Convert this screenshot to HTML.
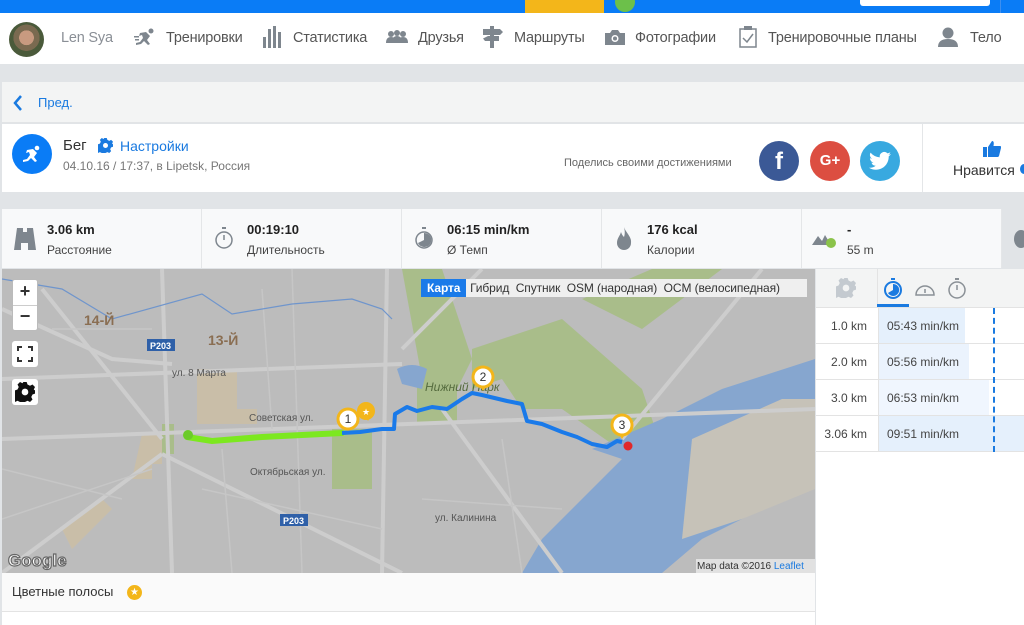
<!DOCTYPE html>
<html><head><meta charset="utf-8"><style>
*{box-sizing:border-box;margin:0;padding:0}
body{width:1024px;height:625px;overflow:hidden;background:#e1e4e7;font-family:"Liberation Sans",Arial,sans-serif;position:relative;color:#333}
.abs{position:absolute}
.nav{top:13px;left:0;width:1024px;height:51px;background:#fff}
.nav span{position:absolute;top:17px;font-size:14.5px;color:#555;letter-spacing:-0.2px}
.stat{position:absolute;top:209px;height:59px;width:200px;border-right:1px solid #e4e6e8;background:#f8f9fa}
.stat b{position:absolute;left:45px;top:13px;font-size:13px;color:#222}
.stat i{position:absolute;left:45px;top:34px;font-size:12px;font-style:normal;color:#444}
.row{position:absolute;left:816px;width:208px;height:36px;border-bottom:1px solid #e3e3e3;background:#fff;font-size:12px;color:#444}
.row .k{position:absolute;left:0;width:51px;text-align:right;top:11px}
.row .bar{position:absolute;left:62px;top:0;height:35px;background:#e5f0fc;border-left:1px solid #e3e3e3}
.row .v{position:absolute;left:71px;top:11px}
</style></head><body>
<div class="abs" style="top:0;left:0;width:1024px;height:13px;background:#0a7cf6"></div>
<div class="abs" style="top:0;left:525px;width:79px;height:13px;background:#f3b61a"></div>
<div class="abs" style="top:-8px;left:615px;width:20px;height:20px;border-radius:50%;background:#6cc04a"></div>
<div class="abs" style="top:0;left:860px;width:130px;height:6px;background:#fff;border-radius:0 0 3px 3px"></div>
<div class="abs" style="top:0;left:1000px;width:1px;height:13px;background:#3d8ff0"></div>
<div class="abs nav">
<div class="abs" style="left:9px;top:9px;width:35px;height:35px;border-radius:50%;background:radial-gradient(circle at 50% 45%,#c89a80 0 28%,#7a6a50 29% 50%,#4a5a3a 51%)"></div>
<span style="left:61px;color:#8a8f96">Len Sya</span>
<svg class="abs" style="left:134px;top:14px" width="22" height="20" viewBox="0 0 22 20"><g fill="#7e868e"><circle cx="17" cy="4" r="2.5"/><path d="M6 6l6-1 4 4-3 4 3 4-2 1-4-4-3 3-5 1 0-2 4-1 3-4-1-3-3 1z"/><rect x="0" y="9" width="5" height="1.5"/><rect x="1" y="12" width="4" height="1.5"/></g></svg>
<span style="left:166px">Тренировки</span>
<svg class="abs" style="left:263px;top:13px" width="20" height="22"><g fill="#7e868e"><rect x="0" y="11" width="3" height="11"/><rect x="5" y="3" width="3" height="19"/><rect x="10" y="0" width="3" height="22"/><rect x="15" y="6" width="3" height="16"/></g></svg>
<span style="left:293px">Статистика</span>
<svg class="abs" style="left:386px;top:17px" width="22" height="14"><g fill="#7e868e"><circle cx="5" cy="4" r="3"/><circle cx="11" cy="3" r="3"/><circle cx="17" cy="4" r="3"/><path d="M0 13q0-6 5-6t5 6zM6 13q0-7 5-7t5 7zM12 13q0-6 5-6t5 6z"/></g></svg>
<span style="left:418px">Друзья</span>
<svg class="abs" style="left:483px;top:13px" width="20" height="22"><g fill="#7e868e"><rect x="7" y="0" width="4" height="22"/><path d="M0 3h17l3 3-3 3H0zM5 10h11v5H2l-2-2.5z"/></g></svg>
<span style="left:514px">Маршруты</span>
<svg class="abs" style="left:605px;top:17px" width="20" height="15"><path fill="#7e868e" d="M0 3h5l2-3h6l2 3h5v12H0z"/><circle cx="10" cy="8.5" r="3.5" fill="#fff"/><circle cx="10" cy="8.5" r="2" fill="#7e868e"/></svg>
<span style="left:635px">Фотографии</span>
<svg class="abs" style="left:739px;top:13px" width="18" height="22"><rect x="1" y="3" width="16" height="18" fill="none" stroke="#7e868e" stroke-width="1.5"/><rect x="5" y="0" width="8" height="4" fill="#7e868e"/><path d="M4 12l4 4 6-8" fill="none" stroke="#7e868e" stroke-width="1.5"/></svg>
<span style="left:768px">Тренировочные планы</span>
<svg class="abs" style="left:938px;top:14px" width="20" height="20"><g fill="#7e868e"><circle cx="10" cy="6" r="5.5"/><path d="M0 20q0-8 10-8t10 8z"/></g></svg>
<span style="left:970px">Тело</span>
</div>
<div class="abs" style="top:82px;left:2px;width:1022px;height:41px;background:#f3f4f4;border-bottom:1px solid #e2e4e6"></div>
<svg class="abs" style="left:13px;top:95px" width="10" height="16"><path d="M8 1L2 8l6 7" fill="none" stroke="#1a7ae0" stroke-width="2.5"/></svg>
<div class="abs" style="left:38px;top:95px;font-size:13px;color:#1a7ae0">Пред.</div>
<div class="abs" style="top:124px;left:2px;width:1022px;height:68px;background:#fff"></div>
<div class="abs" style="top:124px;left:922px;width:1px;height:68px;background:#e4e6e8"></div>
<div class="abs" style="left:12px;top:134px;width:40px;height:40px;border-radius:50%;background:#0a7cf6"></div>
<svg class="abs" style="left:21px;top:143px" width="22" height="22" viewBox="0 0 22 20"><g fill="#fff"><circle cx="16" cy="4" r="2.3"/><path d="M6 6l6-1 4 4-3 4 3 4-2 1-4-4-3 3-5 1 0-2 4-1 3-4-1-3-3 1z"/></g></svg>
<div class="abs" style="left:63px;top:137px;font-size:15px;color:#333">Бег</div>
<svg class="abs" style="left:98px;top:138px" width="15" height="15" viewBox="0 0 24 24"><path fill="#1a7ae0" d="M10 0h4l1 3 3 1.5 3-1.5 3 3-1.5 3L24 10v4l-3 1-1.5 3 1.5 3-3 3-3-1.5-3 1.5-1 3h-4l-1-3-3-1.5-3 1.5-3-3 1.5-3L0 14v-4l3-1 1.5-3L3 3l3-3 3 1.5z"/><circle cx="12" cy="12" r="4" fill="#fff"/></svg>
<div class="abs" style="left:120px;top:138px;font-size:14px;color:#1a7ae0">Настройки</div>
<div class="abs" style="left:63px;top:159px;font-size:12px;color:#777">04.10.16 / 17:37, в Lipetsk, Россия</div>
<div class="abs" style="left:564px;top:157px;font-size:11px;color:#666">Поделись своими достижениями</div>
<div class="abs" style="left:759px;top:141px;width:40px;height:40px;border-radius:50%;background:#3b5996;color:#fff;font-weight:bold;font-size:24px;text-align:center;line-height:42px">f</div>
<div class="abs" style="left:810px;top:141px;width:40px;height:40px;border-radius:50%;background:#dc4e41;color:#fff;font-weight:bold;font-size:15px;text-align:center;line-height:40px">G+</div>
<div class="abs" style="left:860px;top:141px;width:40px;height:40px;border-radius:50%;background:#38a9e0"></div>
<svg class="abs" style="left:869px;top:151px" width="22" height="20" viewBox="0 0 24 20"><path fill="#fff" d="M24 2.4a10 10 0 01-2.8.8A5 5 0 0023.3.5a10 10 0 01-3.1 1.2A4.9 4.9 0 0011.8 6 14 14 0 011.7.9a4.9 4.9 0 001.5 6.6A4.9 4.9 0 011 6.9a4.9 4.9 0 003.9 4.8 5 5 0 01-2.2.1 4.9 4.9 0 004.6 3.4A9.9 9.9 0 010 17.3 14 14 0 007.5 19.5c9.1 0 14-7.5 14-14v-.6A10 10 0 0024 2.4z"/></svg>
<svg class="abs" style="left:983px;top:141px" width="18" height="16"><path fill="#1a7ae0" d="M0 6h4v10H0zM5 6l4-6c2 0 2 2 1.5 5H17c1 0 1.5 1 1 2l-2 8c-.3.8-1 1-2 1H5z"/></svg>
<div class="abs" style="left:953px;top:162px;font-size:14px;color:#333">Нравится</div>
<div class="abs" style="left:1020px;top:164px;width:8px;height:10px;border-radius:50%;background:#1a7ae0"></div>

<div class="stat" style="left:2px"><svg class="abs" style="left:12px;top:19px" width="22" height="22"><path fill="#7e868e" d="M3 0h6v4h4V0h6l3 22h-8v-7H7v7H0z"/></svg><b>3.06 km</b><i>Расстояние</i></div>
<div class="stat" style="left:202px"><svg class="abs" style="left:13px;top:18px" width="18" height="24"><rect x="7" y="0" width="4" height="2" fill="#7e868e"/><circle cx="9" cy="13" r="8" fill="none" stroke="#7e868e" stroke-width="1.5"/><path d="M9 8v5" stroke="#7e868e" stroke-width="1.5"/></svg><b>00:19:10</b><i>Длительность</i></div>
<div class="stat" style="left:402px"><svg class="abs" style="left:13px;top:18px" width="18" height="24"><rect x="7" y="0" width="4" height="2" fill="#7e868e"/><circle cx="9" cy="13" r="8" fill="none" stroke="#7e868e" stroke-width="1.5"/><path d="M9 13V6a7 7 0 11-6 10z" fill="#7e868e"/></svg><b>06:15 min/km</b><i>Ø Темп</i></div>
<div class="stat" style="left:602px"><svg class="abs" style="left:14px;top:18px" width="16" height="24"><path fill="#7e868e" d="M8 0C10 6 16 10 15 16A7 7 0 011 16C1 11 4 9 5 5c1 3 2 4 3 5C9 7 9 4 8 0z"/></svg><b>176 kcal</b><i>Калории</i></div>
<div class="stat" style="left:802px"><svg class="abs" style="left:10px;top:20px" width="26" height="20"><path fill="#7e868e" d="M0 16l6-9 4 5 3-6 6 10z"/><circle cx="19" cy="14" r="5" fill="#8bc34a"/></svg><b>-</b><i>55 m</i></div>
<div class="abs" style="left:1014px;top:230px;width:14px;height:18px;border-radius:50%;background:#7e868e"></div>

<svg class="abs" style="left:2px;top:269px" width="813" height="304" viewBox="0 0 813 304">
<rect width="813" height="304" fill="#bcbcbc"/>
<g fill="#a9bd8a">
<path d="M400 0L440 0 470 90 455 120 420 110z"/>
<path d="M470 80L560 50 640 120 660 180 610 175 560 140 520 140 500 110 470 120z"/>
<path d="M580 30L650 0 720 0 640 60z"/>
<path d="M330 160h40v60h-40z"/>
<path d="M160 155h12v30h-12z"/>
<path d="M415 105h40v50h-40z"/>
</g>
<g fill="#c9bea8"><path d="M195 100h40v40h20v15h-60z"/><path d="M140 165h20v30h-10v15h-20z"/><path d="M60 260l40-30 10 10-40 40z"/></g>
<path fill="#86a6cf" d="M590 180L660 150 720 120 813 90 813 210 760 240 700 270 660 304 520 304 540 270 580 230 620 190z"/>
<path fill="#c6c2b8" d="M690 170L780 130 813 130 813 220 740 250 680 270z"/>
<path fill="#86a6cf" d="M395 100q15-8 30 0l-5 20-20-5z"/>
<g fill="none" stroke="#cdcdcd" stroke-width="4">
<path d="M0 170L813 140"/><path d="M160 0L170 304"/><path d="M0 110L400 95"/><path d="M160 185L400 304"/><path d="M0 304L160 185"/>
<path d="M385 0L380 304"/><path d="M440 140L560 304"/><path d="M0 40L110 90 170 95"/><path d="M40 20L160 170"/><path d="M480 0L400 80"/><path d="M620 170L760 0"/>
</g>
<g fill="none" stroke="#c6c6c6" stroke-width="1.5">
<path d="M0 200L120 230"/><path d="M0 250L150 200"/><path d="M220 180L230 304"/><path d="M260 20L270 160"/><path d="M500 170L520 304"/><path d="M420 230L560 240"/><path d="M50 60L150 60"/><path d="M290 0L300 304"/><path d="M200 220L380 260"/>
</g>
<path d="M0 10L60 20 110 50 200 25 230 45 290 35 350 30 380 40 390 50" fill="none" stroke="#6f95cc" stroke-width="1.2"/>
<g fill="#2f60a8"><rect x="145" y="70" width="28" height="12"/><rect x="278" y="245" width="28" height="12"/></g>
<g fill="#fff" font-size="9" font-weight="bold"><text x="148" y="80">P203</text><text x="281" y="255">P203</text></g>
<g fill="#8a6e52" font-size="14" font-weight="bold"><text x="82" y="56">14-Й</text><text x="206" y="76">13-Й</text></g>
<g fill="#555" font-size="10"><text x="170" y="107">ул. 8 Марта</text><text x="247" y="152">Советская ул.</text><text x="248" y="206">Октябрьская ул.</text><text x="433" y="252">ул. Калинина</text></g>
<text x="423" y="122" fill="#556b3e" font-size="12" font-style="italic">Нижний Парк</text>
<path d="M185 168L210 172 260 168 300 166 340 164" fill="none" stroke="#7ce81f" stroke-width="6" stroke-linecap="round"/>
<circle cx="186" cy="166" r="5" fill="#6ccb2a"/>
<path d="M340 164L358 163 380 160 392 160 393 145 405 138 415 142 430 138 445 140 460 130 470 124 480 126 505 132 520 135 525 152 540 155 560 163 575 168 590 175 605 178 615 172 620 173" fill="none" stroke="#1a7ae9" stroke-width="4" stroke-linejoin="round"/>
<circle cx="626" cy="177" r="4.5" fill="#e0282a"/>
<g><path d="M360 140l6 12 6-12z" fill="#f3b61a"/><circle cx="364" cy="142" r="9" fill="#f3b61a"/><text x="360" y="146" font-size="9" fill="#fff">★</text></g>
<g font-size="12" text-anchor="middle" fill="#333">
<path d="M346 162l-6-9h12z" fill="#f3b61a"/><circle cx="346" cy="150" r="10" fill="#fff" stroke="#f3b61a" stroke-width="3"/><text x="346" y="154">1</text>
<path d="M481 122l-6-9h12z" fill="#f3b61a"/><circle cx="481" cy="108" r="10" fill="#fff" stroke="#f3b61a" stroke-width="3"/><text x="481" y="112">2</text>
<path d="M620 170l-6-9h12z" fill="#f3b61a"/><circle cx="620" cy="156" r="10" fill="#fff" stroke="#f3b61a" stroke-width="3"/><text x="620" y="160">3</text>
</g>
<text x="6" y="297" font-size="17" font-weight="bold" fill="#fff" stroke="#666" stroke-width="1.2">Google</text>
<rect x="694" y="290" width="119" height="14" fill="#e8e8e8" opacity=".85"/>
<text x="695" y="300" font-size="10" fill="#333">Map data ©2016 <tspan fill="#1a7ae0">Leaflet</tspan></text>
</svg>
<div class="abs" style="left:421px;top:279px;height:18px;width:386px;background:#efefef"></div>
<div class="abs" style="left:421px;top:279px;height:18px;width:45px;background:#1a7ae9"></div>
<div class="abs" style="left:427px;top:281px;font-size:12px;color:#333;white-space:nowrap;letter-spacing:-0.1px"><span style="color:#fff;font-weight:bold">Карта</span>&nbsp;&nbsp; Гибрид &nbsp;Спутник &nbsp;OSM (народная) &nbsp;OCM (велосипедная)</div>
<div class="abs" style="left:12px;top:279px;width:26px;height:52px;background:#fff;border-radius:3px;border:1px solid #bbb"></div>
<div class="abs" style="left:12px;top:279px;width:26px;font-size:18px;font-weight:bold;text-align:center;line-height:25px">+<br>−</div>
<div class="abs" style="left:13px;top:305px;width:24px;height:1px;background:#ccc"></div>
<div class="abs" style="left:12px;top:341px;width:26px;height:26px;background:#fff;border-radius:3px"></div>
<svg class="abs" style="left:17px;top:346px" width="16" height="16"><path d="M1 5V1h4M11 1h4v4M15 11v4h-4M5 15H1v-4" fill="none" stroke="#333" stroke-width="2"/></svg>
<div class="abs" style="left:12px;top:379px;width:26px;height:26px;background:#fff;border-radius:3px"></div>
<svg class="abs" style="left:15px;top:382px" width="20" height="20" viewBox="0 0 24 24"><path fill="#111" d="M10 0h4l1 3 3 1.5 3-1.5 3 3-1.5 3L24 10v4l-3 1-1.5 3 1.5 3-3 3-3-1.5-3 1.5-1 3h-4l-1-3-3-1.5-3 1.5-3-3 1.5-3L0 14v-4l3-1 1.5-3L3 3l3-3 3 1.5z"/><circle cx="12" cy="12" r="4" fill="#fff"/></svg>
<div class="abs" style="left:2px;top:573px;width:813px;height:39px;background:#fafafa;border-bottom:1px solid #e3e3e3"></div>
<div class="abs" style="left:12px;top:584px;font-size:13px;color:#333">Цветные полосы</div>
<div class="abs" style="left:127px;top:585px;width:15px;height:15px;border-radius:50%;background:#f3b61a;color:#fff;font-size:10px;text-align:center;line-height:15px">★</div>
<div class="abs" style="left:2px;top:612px;width:813px;height:13px;background:#fff"></div>

<div class="abs" style="left:816px;top:269px;width:208px;height:39px;background:#f3f4f4;border-bottom:1px solid #e3e3e3"></div>
<div class="abs" style="left:877px;top:269px;width:1px;height:39px;background:#e3e3e3"></div>
<svg class="abs" style="left:836px;top:278px" width="20" height="20" viewBox="0 0 24 24"><path fill="#c4cad0" d="M10 0h4l1 3 3 1.5 3-1.5 3 3-1.5 3L24 10v4l-3 1-1.5 3 1.5 3-3 3-3-1.5-3 1.5-1 3h-4l-1-3-3-1.5-3 1.5-3-3 1.5-3L0 14v-4l3-1 1.5-3L3 3l3-3 3 1.5z"/><circle cx="12" cy="12" r="4" fill="#f3f4f4"/></svg>
<svg class="abs" style="left:883px;top:278px" width="20" height="22"><rect x="8" y="0" width="4" height="2" fill="#1a7ae0"/><circle cx="10" cy="12" r="8" fill="none" stroke="#1a7ae0" stroke-width="2"/><path d="M10 12V6a6 6 0 11-5 9z" fill="#1a7ae0"/></svg>
<div class="abs" style="left:877px;top:304px;width:32px;height:3px;background:#1a7ae0"></div>
<svg class="abs" style="left:915px;top:281px" width="20" height="16"><path d="M1 14a9 9 0 1118 0z" fill="none" stroke="#8a9096" stroke-width="1.5"/><path d="M10 8v4" stroke="#8a9096" stroke-width="1.5"/></svg>
<svg class="abs" style="left:947px;top:278px" width="20" height="22"><rect x="8" y="0" width="4" height="2" fill="#8a9096"/><circle cx="10" cy="12" r="8" fill="none" stroke="#8a9096" stroke-width="1.5"/><path d="M10 7v5" stroke="#8a9096" stroke-width="1.5"/></svg>
<div class="row" style="top:308px"><span class="k">1.0 km</span><div class="bar" style="width:87px"></div><span class="v">05:43 min/km</span></div>
<div class="row" style="top:344px"><span class="k">2.0 km</span><div class="bar" style="width:91px;background:#ebf3fd"></div><span class="v">05:56 min/km</span></div>
<div class="row" style="top:380px"><span class="k">3.0 km</span><div class="bar" style="width:111px;background:#f0f6fe"></div><span class="v">06:53 min/km</span></div>
<div class="row" style="top:416px"><span class="k">3.06 km</span><div class="bar" style="width:146px"></div><span class="v">09:51 min/km</span></div>
<div class="abs" style="left:993px;top:308px;height:144px;border-left:2px dashed #1a7ae0"></div>
<div class="abs" style="left:816px;top:452px;width:208px;height:173px;background:#fff"></div>
</body></html>
